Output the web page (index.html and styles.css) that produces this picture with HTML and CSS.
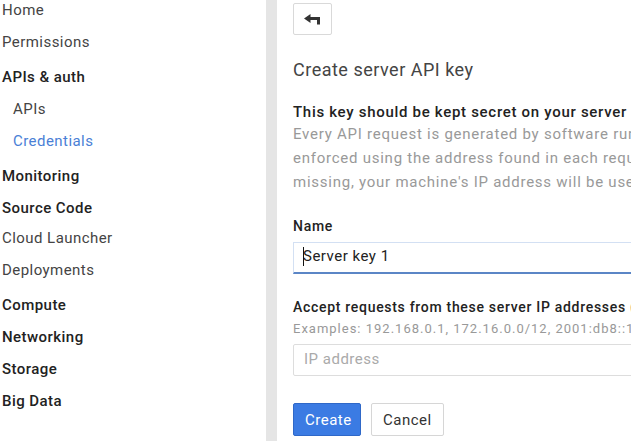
FILE: index.html
```html
<!DOCTYPE html>
<html>
<head>
<meta charset="utf-8">
<link rel="stylesheet" href="styles.css">
</head>
<body>
<div class="page">
  <nav class="sidebar">
    <ul class="nav">
      <li class="item">Home</li>
      <li class="item">Permissions</li>
      <li class="item strong group">APIs &amp; auth</li>
      <li class="item sub">APIs</li>
      <li class="item sub active">Credentials</li>
      <li class="item strong group">Monitoring</li>
      <li class="item strong">Source Code</li>
      <li class="item tight">Cloud Launcher</li>
      <li class="item">Deployments</li>
      <li class="item strong group">Compute</li>
      <li class="item strong">Networking</li>
      <li class="item strong">Storage</li>
      <li class="item strong">Big Data</li>
    </ul>
  </nav>
  <div class="divider"></div>
  <main class="content">
    <button class="back" type="button" aria-label="Back">
      <svg width="17" height="11" viewBox="0 0 17 11"><path d="M0 4.5 L6.5 0 V3 H16 V10.5 H13 V6 H6.5 V9 Z" fill="#333"/></svg>
    </button>
    <h1 class="title">Create server API key</h1>
    <p class="lead">This key should be kept secret on your server</p>
    <p class="desc">
      <span class="line">Every API request is generated by software running on a machine that you control. Per-user limits will be</span>
      <span class="line">enforced using the address found in each request's X-User-IP HTTP header. If this header is</span>
      <span class="line">missing, your machine's IP address will be used instead.</span>
    </p>
    <label class="label">Name</label>
    <div class="input focused"><span class="caret"></span>Server key 1</div>
    <label class="label label-ip">Accept requests from these server IP addresses (optional)</label>
    <p class="hint">Examples: 192.168.0.1, 172.16.0.0/12, 2001:db8::1 or 2001:db8::/64</p>
    <div class="input placeholder">IP address</div>
    <div class="actions">
      <button class="btn primary" type="button">Create</button>
      <button class="btn" type="button">Cancel</button>
    </div>
  </main>
</div>
</body>
</html>
```
FILE: styles.css
```css
html, body {
  margin: 0;
  padding: 0;
  background: #fff;
}
body {
  font-family: Roboto, "Liberation Sans", Arial, sans-serif;
  color: #333;
  width: 637px;
  height: 441px;
  overflow: hidden;
}
.page {
  display: flex;
  height: 441px;
}
.sidebar {
  width: 266px;
  flex: none;
}
.nav {
  list-style: none;
  margin: 0;
  padding: 0 0 0 2px;
  margin-top: -6px;
}
.item {
  height: 32px;
  line-height: 32px;
  font-size: 15px;
  letter-spacing: 0.45px;
  color: #444;
  white-space: nowrap;
}
.item.strong {
  font-weight: 500;
  color: #222;
}
.item.group {
  margin-top: 3px;
}
.item.tight {
  margin-top: -2px;
}
.item.sub {
  padding-left: 11px;
}
.item.active {
  color: #4a7fd6;
}
.divider {
  width: 11px;
  flex: none;
  background: #e5e5e5;
}
.content {
  width: 338px;
  flex: none;
  padding-left: 16px;
  overflow: hidden;
  white-space: nowrap;
}
.back {
  display: flex;
  align-items: center;
  justify-content: center;
  width: 39px;
  height: 32px;
  margin-top: 3px;
  padding: 0;
  background: #fff;
  border: 1px solid #d9d9d9;
  border-radius: 2px;
}
.title {
  margin: 23px 0 0;
  font-size: 18px;
  letter-spacing: 0.5px;
  font-weight: 400;
  color: #444;
  line-height: 24px;
}
.lead {
  margin: 20px 0 0;
  font-size: 15px;
  letter-spacing: 0.7px;
  font-weight: 500;
  color: #222;
  line-height: 20px;
}
.desc {
  margin: 0;
  font-size: 15px;
  letter-spacing: 0.75px;
  color: #999;
  line-height: 24px;
}
.line {
  display: block;
}
.label {
  display: block;
  margin-top: 22px;
  font-size: 14px;
  letter-spacing: 0.7px;
  font-weight: 500;
  color: #222;
  line-height: 20px;
}
.label-ip {
  margin-top: 23px;
}
.hint {
  margin: 3px 0 0;
  font-size: 13px;
  letter-spacing: 1px;
  color: #999;
  line-height: 18px;
}
.input {
  box-sizing: border-box;
  width: 360px;
  height: 32px;
  margin-top: 6px;
  padding-left: 10px;
  font-size: 15px;
  letter-spacing: 0.5px;
  line-height: 30px;
  border: 1px solid #ddd;
  border-radius: 2px;
  color: #222;
  position: relative;
}
.input.focused {
  margin-top: 6px;
  line-height: 27px;
  border-color: #d3e0f3;
  border-bottom: 2px solid #5b86c6;
  border-radius: 0;
  padding-left: 9px;
}
.caret {
  position: absolute;
  left: 9px;
  top: 4px;
  width: 1px;
  height: 19px;
  background: #111;
}
.input.placeholder {
  color: #aaa;
  margin-top: 6px;
  line-height: 29px;
}
.actions {
  display: flex;
  gap: 10px;
  margin-top: 27px;
}
.btn {
  height: 33px;
  padding: 0 11px;
  font-family: Roboto, "Liberation Sans", Arial, sans-serif;
  font-size: 15px;
  letter-spacing: 0.5px;
  color: #333;
  background: #fff;
  border: 1px solid #d6d6d6;
  border-radius: 2px;
}
.btn.primary {
  color: #fff;
  background: #3b7be3;
  border-color: #2f68c8;
  width: 68px;
}
```
